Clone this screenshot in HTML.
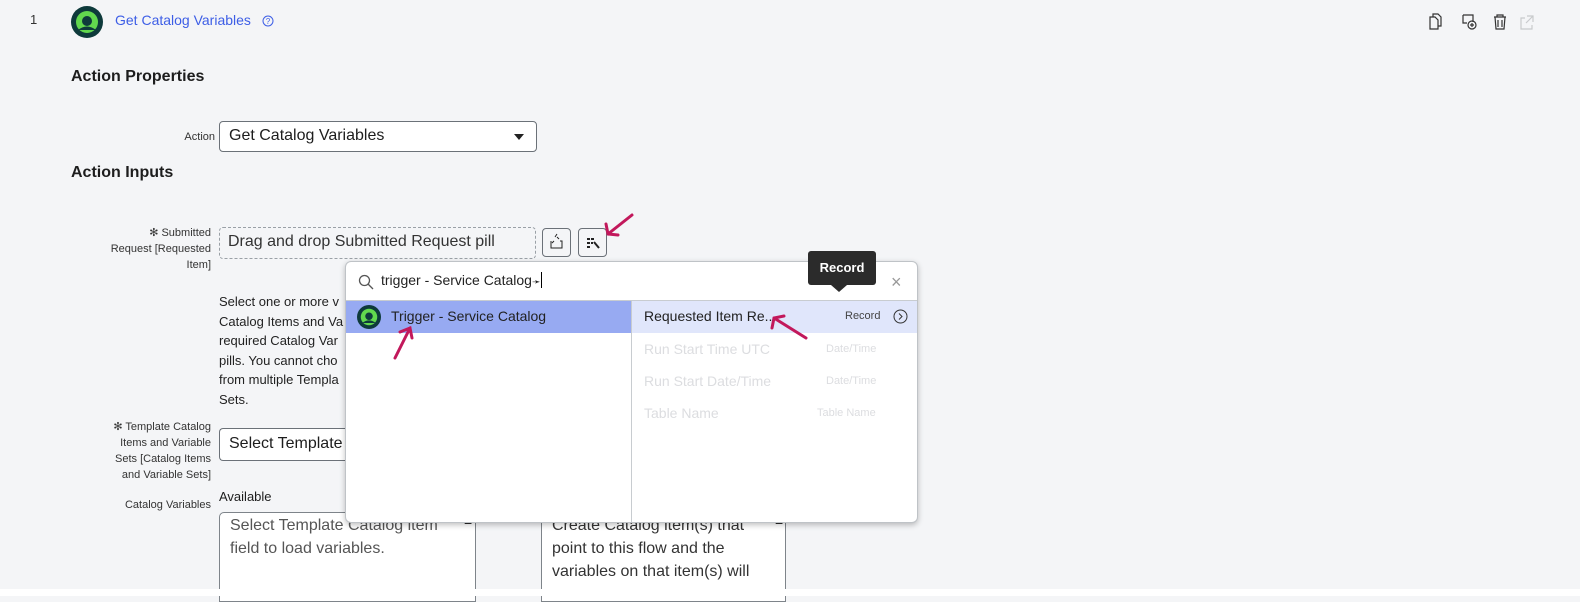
<!DOCTYPE html>
<html><head><meta charset="utf-8"><style>
*{box-sizing:border-box}
body{margin:0;width:1580px;height:596px;background:#f4f5f7;font-family:"Liberation Sans",sans-serif;color:#1d1d1d;position:relative;overflow:hidden}
.a{position:absolute}
.lbl{font-size:11px;color:#333;text-align:right;line-height:16px}
h3{margin:0;font-size:16px;font-weight:bold;color:#1d1d1d;position:absolute}
.box{position:absolute;background:#fff;border:1px solid #7e848a;border-radius:4px}
.btn{position:absolute;width:29px;height:29px;border:1px solid #6b7178;border-radius:4px;background:#f4f5f7}
</style></head><body>
<div class="a" style="left:30px;top:12px;font-size:13px;color:#333">1</div>
<svg class="a" style="left:71px;top:6px" width="32" height="32" viewBox="0 0 32 32"><circle cx="16" cy="16" r="16" fill="#0e3a3b"/><circle cx="16" cy="16" r="11" fill="#62d84e"/><circle cx="16" cy="15" r="5" fill="#0e3a3b"/><path d="M7 24 Q16 17 25 24" fill="#0e3a3b"/></svg>
<div class="a" style="left:115px;top:12px;font-size:14px;color:#3d5ee6">Get Catalog Variables</div>
<svg class="a" style="left:262px;top:15px" width="12" height="12" viewBox="0 0 12 12"><circle cx="6" cy="6" r="5" fill="none" stroke="#3d5ee6"/><text x="6" y="9" font-size="8" text-anchor="middle" fill="#3d5ee6" font-family="Liberation Sans">?</text></svg>
<svg class="a" style="left:1427px;top:13px" width="110" height="18" viewBox="0 0 110 18" fill="none" stroke="#333" stroke-width="1.2"><path d="M3 4h5l3 3v9H3z M6 4V1h5l3 3v9h-3"/><path d="M36 2h10v7 M36 2v8h4"/><circle cx="45" cy="12" r="4"/><path d="M45 10v4M43 12h4"/><path d="M67 4h12M70 4V2h6v2M68 4l1 12h8l1-12M71 7v7M75 7v7"/><path stroke="#c8cacc" d="M98 5h-4v11h11v-4M100 3h6v6M106 3l-7 7"/></svg>
<h3 style="left:71px;top:68px">Action Properties</h3>
<div class="a lbl" style="left:150px;top:129px;width:65px">Action</div>
<div class="box" style="left:219px;top:121px;width:318px;height:31px;border-color:#6b7178"><span class="a" style="left:9px;top:5px;font-size:16px">Get Catalog Variables</span><span class="a" style="left:294px;top:12px;border:5px solid transparent;border-top:6px solid #222"></span></div>
<h3 style="left:71px;top:164px">Action Inputs</h3>
<div class="a lbl" style="left:80px;top:225px;width:131px">✻ Submitted<br>Request [Requested<br>Item]</div>
<div class="a" style="left:219px;top:227px;width:317px;height:32px;border:1px dashed #9aa0a6;border-radius:4px;background:#f4f5f7;font-size:16px;padding:5px 8px;color:#333">Drag and drop Submitted Request pill</div>
<div class="btn" style="left:542px;top:228px"><svg width="27" height="27" viewBox="0 0 27 27" fill="none" stroke="#222" stroke-width="1"><path d="M8 12v7h11v-7h-2M11 12l-2 2M12 8l2-3M14 8l2 2"/></svg></div>
<div class="btn" style="left:578px;top:228px"><svg width="27" height="27" viewBox="0 0 27 27"><path d="M8 9h3v2H8zM8 13h3v2H8zM8 17h3v2H8zM12 9h3v2h-3zM12 13h2v2h-2z" fill="#222"/><path d="M15 13l5 6" stroke="#222" stroke-width="2"/></svg></div>
<svg class="a" style="left:600px;top:212px" width="36" height="30"><path d="M32 3L8 22M6 12l2 10 10 1" stroke="#c2185b" stroke-width="3" fill="none" stroke-linecap="round"/></svg>
<div class="a" style="left:219px;top:292px;font-size:13px;line-height:19.5px;color:#222">Select one or more v<br>Catalog Items and Va<br>required Catalog Var<br>pills. You cannot cho<br>from multiple Templa<br>Sets.</div>
<div class="a lbl" style="left:80px;top:419px;width:131px">✻ Template Catalog<br>Items and Variable<br>Sets [Catalog Items<br>and Variable Sets]</div>
<div class="box" style="left:219px;top:428px;width:140px;height:33px;border-color:#6b7178;border-right:none;border-radius:4px 0 0 4px"><span class="a" style="left:9px;top:6px;font-size:16px;white-space:nowrap">Select Template</span></div>
<div class="a lbl" style="left:80px;top:497px;width:131px">Catalog Variables</div>
<div class="a" style="left:219px;top:489px;font-size:13px">Available</div>
<div class="box" style="left:219px;top:512px;width:257px;height:90px;border-color:#7e848a;border-radius:5px 0 0 0"><div style="padding:1px 10px;font-size:16px;line-height:23px;color:#555">Select Template Catalog item<br>field to load variables.</div><span class="a" style="left:244px;top:2px;font-size:14px">−</span></div>
<div class="box" style="left:541px;top:512px;width:245px;height:90px;border-radius:0"><div style="padding:1px 10px;font-size:16px;line-height:23px;color:#333">Create Catalog item(s) that<br>point to this flow and the<br>variables on that item(s) will</div><span class="a" style="left:233px;top:2px;font-size:14px">−</span></div>
<div class="a" style="left:0;top:589px;width:1580px;height:7px;background:#fff"></div>
<div class="a" style="left:345px;top:261px;width:573px;height:262px;background:#fff;border:1px solid #bfc3c7;border-radius:6px;box-shadow:0 2px 6px rgba(0,0,0,.25);overflow:hidden">
 <svg class="a" style="left:12px;top:12px" width="16" height="16" fill="none" stroke="#555" stroke-width="1.3"><circle cx="6.5" cy="6.5" r="5"/><path d="M10 10l5 5"/></svg>
 <div class="a" style="left:35px;top:10px;font-size:14px;color:#222">trigger - Service Catalog<span style="font-size:10px">➛</span><span style="border-left:1.5px solid #000;margin-left:1px">&nbsp;</span></div>
 <div class="a" style="left:545px;top:10px;font-size:18px;color:#999">×</div>
 <div class="a" style="left:0;top:38px;width:573px;border-top:1px solid #c8ccd0"></div>
 <div class="a" style="left:0;top:39px;width:285px;height:32px;background:#97aaf2"></div>
 <svg class="a" style="left:11px;top:43px" width="24" height="24" viewBox="0 0 32 32"><circle cx="16" cy="16" r="16" fill="#0e3a3b"/><circle cx="16" cy="16" r="11" fill="#62d84e"/><circle cx="16" cy="15" r="5" fill="#0e3a3b"/><path d="M7 24 Q16 17 25 24" fill="#0e3a3b"/></svg>
 <div class="a" style="left:45px;top:46px;font-size:14px;color:#222">Trigger - Service Catalog</div>
 <div class="a" style="left:285px;top:39px;height:230px;border-left:1px solid #c8ccd0"></div>
 <div class="a" style="left:286px;top:39px;width:287px;height:32px;background:#e0e6fb"></div>
 <div class="a" style="left:298px;top:46px;font-size:14px;color:#222">Requested Item Re...</div>
 <div class="a" style="left:499px;top:48px;font-size:11px;color:#444">Record</div>
 <svg class="a" style="left:547px;top:47px" width="15" height="15" fill="none" stroke="#333"><circle cx="7.5" cy="7.5" r="6.5"/><path d="M6 4.5l3 3-3 3"/></svg>
 <div class="a" style="left:298px;top:79px;font-size:14px;color:#dcdde0">Run Start Time UTC</div>
 <div class="a" style="left:480px;top:81px;font-size:11px;color:#dcdde0">Date/Time</div>
 <div class="a" style="left:298px;top:111px;font-size:14px;color:#dcdde0">Run Start Date/Time</div>
 <div class="a" style="left:480px;top:113px;font-size:11px;color:#dcdde0">Date/Time</div>
 <div class="a" style="left:298px;top:143px;font-size:14px;color:#dcdde0">Table Name</div>
 <div class="a" style="left:471px;top:145px;font-size:11px;color:#dcdde0">Table Name</div>
</div>
<svg class="a" style="left:390px;top:320px" width="30" height="42"><path d="M5 38L20 8M10 12l10-4 2 10" stroke="#c2185b" stroke-width="3" fill="none" stroke-linecap="round"/></svg>
<svg class="a" style="left:766px;top:306px" width="44" height="36"><path d="M40 32L8 12M6 22l2-10 10-2" stroke="#c2185b" stroke-width="3" fill="none" stroke-linecap="round"/></svg>
<div class="a" style="left:808px;top:251px;width:68px;height:34px;background:#2b2b2b;border-radius:3px;color:#fff;font-size:13px;font-weight:bold;text-align:center;line-height:33px">Record</div>
<div class="a" style="left:831px;top:285px;border:8px solid transparent;border-top:7px solid #2b2b2b"></div>
</body></html>
